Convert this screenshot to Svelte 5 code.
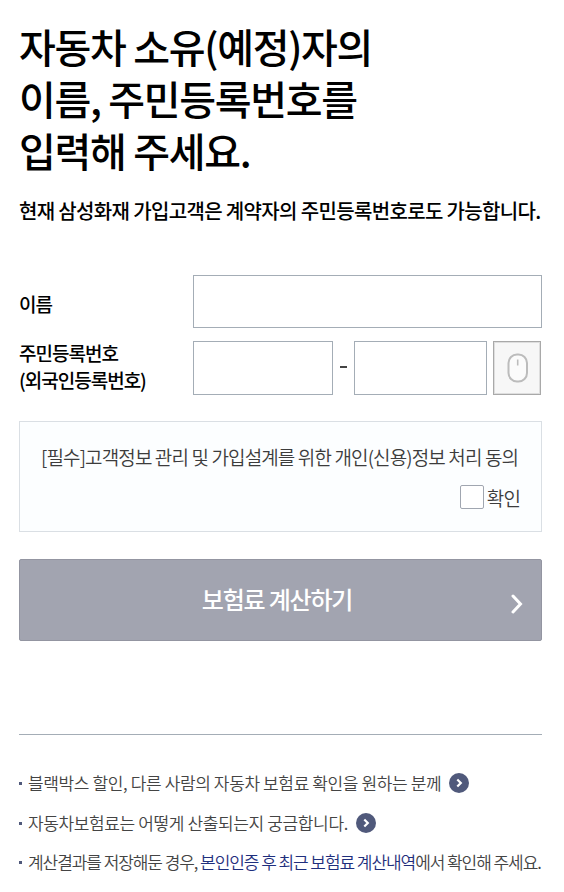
<script lang="ts">
  let name = $state('')
  let idFront = $state('')
  let idBack = $state('')
  let agreed = $state(false)
</script>

{#snippet go()}
  <svg width="20" height="20" viewBox="0 0 20 20" fill="none">
    <circle cx="10" cy="10" r="10" fill="#50597b" />
    <path d="M8.300 6.500l3.500 3.500-3.500 3.500" stroke="#fff" stroke-width="2.200" />
  </svg>
{/snippet}

<main>
  <h1>
    자동차 소유(예정)자의<br />
    이름, 주민등록번호를<br />
    입력해 주세요.
  </h1>
  <p class="sub">현재 삼성화재 가입고객은 계약자의 주민등록번호로도 가능합니다.</p>

  <div class="row">
    <label for="name">이름</label>
    <input id="name" class="name" type="text" bind:value={name} />
  </div>
  <div class="row id-row">
    <label for="id-front">주민등록번호<br />(외국인등록번호)</label>
    <input id="id-front" class="front" type="text" bind:value={idFront} />
    <i class="dash"></i>
    <input class="back" type="password" aria-label="주민등록번호" bind:value={idBack} />
    <button class="mouse" type="button" aria-label="마우스 입력">
      <svg width="22" height="30" viewBox="0 0 22 30" fill="none" stroke="#bcbcbc">
        <rect x="1.500" y="1.500" width="18.500" height="27" rx="8.500" stroke-width="2" fill="#fbfbfb" />
        <path d="M10.700 6.500v6" stroke-width="1.600" />
      </svg>
    </button>
  </div>

  <section class="agree">
    <p>[필수]고객정보 관리 및 가입설계를 위한 개인(신용)정보 처리 동의</p>
    <label class="check"><input type="checkbox" bind:checked={agreed} />확인</label>
  </section>

  <button class="submit" type="button">
    <span>보험료 계산하기</span>
    <svg width="12" height="20" viewBox="0 0 12 20" fill="none" stroke="#fff" stroke-width="3">
      <path d="M2 2l7.500 8L2 18" stroke-linecap="round" />
    </svg>
  </button>

  <ul>
    <li><span>블랙박스 할인, 다른 사람의 자동차 보험료 확인을 원하는 분께</span>{@render go()}</li>
    <li><span>자동차보험료는 어떻게 산출되는지 궁금합니다.</span>{@render go()}</li>
    <li class="tight">
      <span>계산결과를 저장해둔 경우, <em>본인인증 후 최근 보험료 계산내역</em>에서 확인해 주세요.</span>
    </li>
  </ul>
</main>

<style>
  :global(body) {
    margin: 0;
    background: #fff;
  }
  main {
    box-sizing: border-box;
    width: 564px;
    height: 892px;
    padding: 20px 22px 0 19px;
    overflow: hidden;
    color: #000;
    font-family: "Noto Sans CJK KR", sans-serif;
    white-space: nowrap;
  }
  h1, p, ul {
    margin: 0;
    padding: 0;
  }
  h1 {
    font-size: 40px;
    font-weight: 500;
    line-height: 52px;
    letter-spacing: -1.3px;
  }
  .sub {
    margin-top: 21px;
    font-size: 20px;
    font-weight: 500;
    line-height: 28px;
    letter-spacing: -0.65px;
  }
  .row {
    display: flex;
    align-items: center;
    height: 53px;
    margin-top: 50px;
  }
  .row label {
    flex: none;
    width: 174px;
    padding-top: 3px;
    font-size: 19px;
    font-weight: 500;
    line-height: 27px;
    letter-spacing: -1px;
  }
  .id-row {
    height: 54px;
    margin-top: 13px;
  }
  .id-row label {
    padding: 0 0 4px;
  }
  .row input {
    box-sizing: border-box;
    height: 100%;
    padding: 0 12px;
    border: 1px solid #a4adb6;
    border-radius: 0;
    background: #fff;
    font: inherit;
  }
  .name {
    width: 349px;
  }
  .front {
    width: 140px;
  }
  .back {
    width: 133px;
  }
  .dash {
    width: 7px;
    height: 2px;
    margin: 0 7px 3px;
    background: #444;
  }
  .mouse {
    display: flex;
    align-items: center;
    justify-content: center;
    box-sizing: border-box;
    width: 48px;
    height: 54px;
    margin-left: 6px;
    padding: 0;
    border: 1px solid #a9a9a9;
    background: #f7f7f7;
    box-shadow: inset 0 0 0 1px #dedede;
  }
  .mouse svg {
    margin: 0 0 0 1px;
  }
  .agree {
    box-sizing: border-box;
    height: 111px;
    margin-top: 26px;
    padding: 21px 21px 0;
    border: 1px solid #dadfe4;
    background: #fcfeff;
    color: #3c3c3c;
    font-size: 19px;
    font-weight: 350;
    line-height: 28px;
    letter-spacing: -0.87px;
  }
  .check {
    display: flex;
    align-items: center;
    justify-content: flex-end;
    gap: 3px;
    margin-top: 13px;
  }
  .check input {
    appearance: none;
    box-sizing: border-box;
    width: 24px;
    height: 24px;
    margin: 0 0 2px;
    border: 1px solid #a0a6b0;
    border-radius: 2px;
    background: #fff;
  }
  .submit {
    display: grid;
    grid-template-columns: 1fr auto 1fr;
    align-items: center;
    box-sizing: border-box;
    width: 523px;
    height: 82px;
    margin-top: 27px;
    padding: 0 18px 0 15px;
    border: 1px solid #9395a1;
    border-radius: 2px;
    background: #a2a4b0;
    color: #fff;
    font: 500 24px/32px "Noto Sans CJK KR", sans-serif;
    letter-spacing: -1.2px;
  }
  .submit span {
    grid-column: 2;
    margin: -2px 0 0 -4px;
  }
  .submit svg {
    justify-self: end;
    margin-top: 7px;
  }
  ul {
    margin-top: 93px;
    padding-top: 28px;
    border-top: 1px solid #a4adb6;
    list-style: none;
  }
  li {
    display: flex;
    align-items: center;
    box-sizing: border-box;
    height: 40px;
    color: #444;
    font-size: 17px;
    font-weight: 350;
    letter-spacing: -0.37px;
  }
  li span {
    margin-bottom: 2px;
  }
  li::before {
    content: '';
    flex: none;
    width: 3px;
    height: 3px;
    margin-right: 6px;
    background: #50597b;
  }
  .tight {
    height: 38px;
    letter-spacing: -1.06px;
  }
  em {
    color: #1f2f7d;
    font-style: normal;
  }
  li svg {
    flex: none;
    margin-left: 8px;
  }
</style>
